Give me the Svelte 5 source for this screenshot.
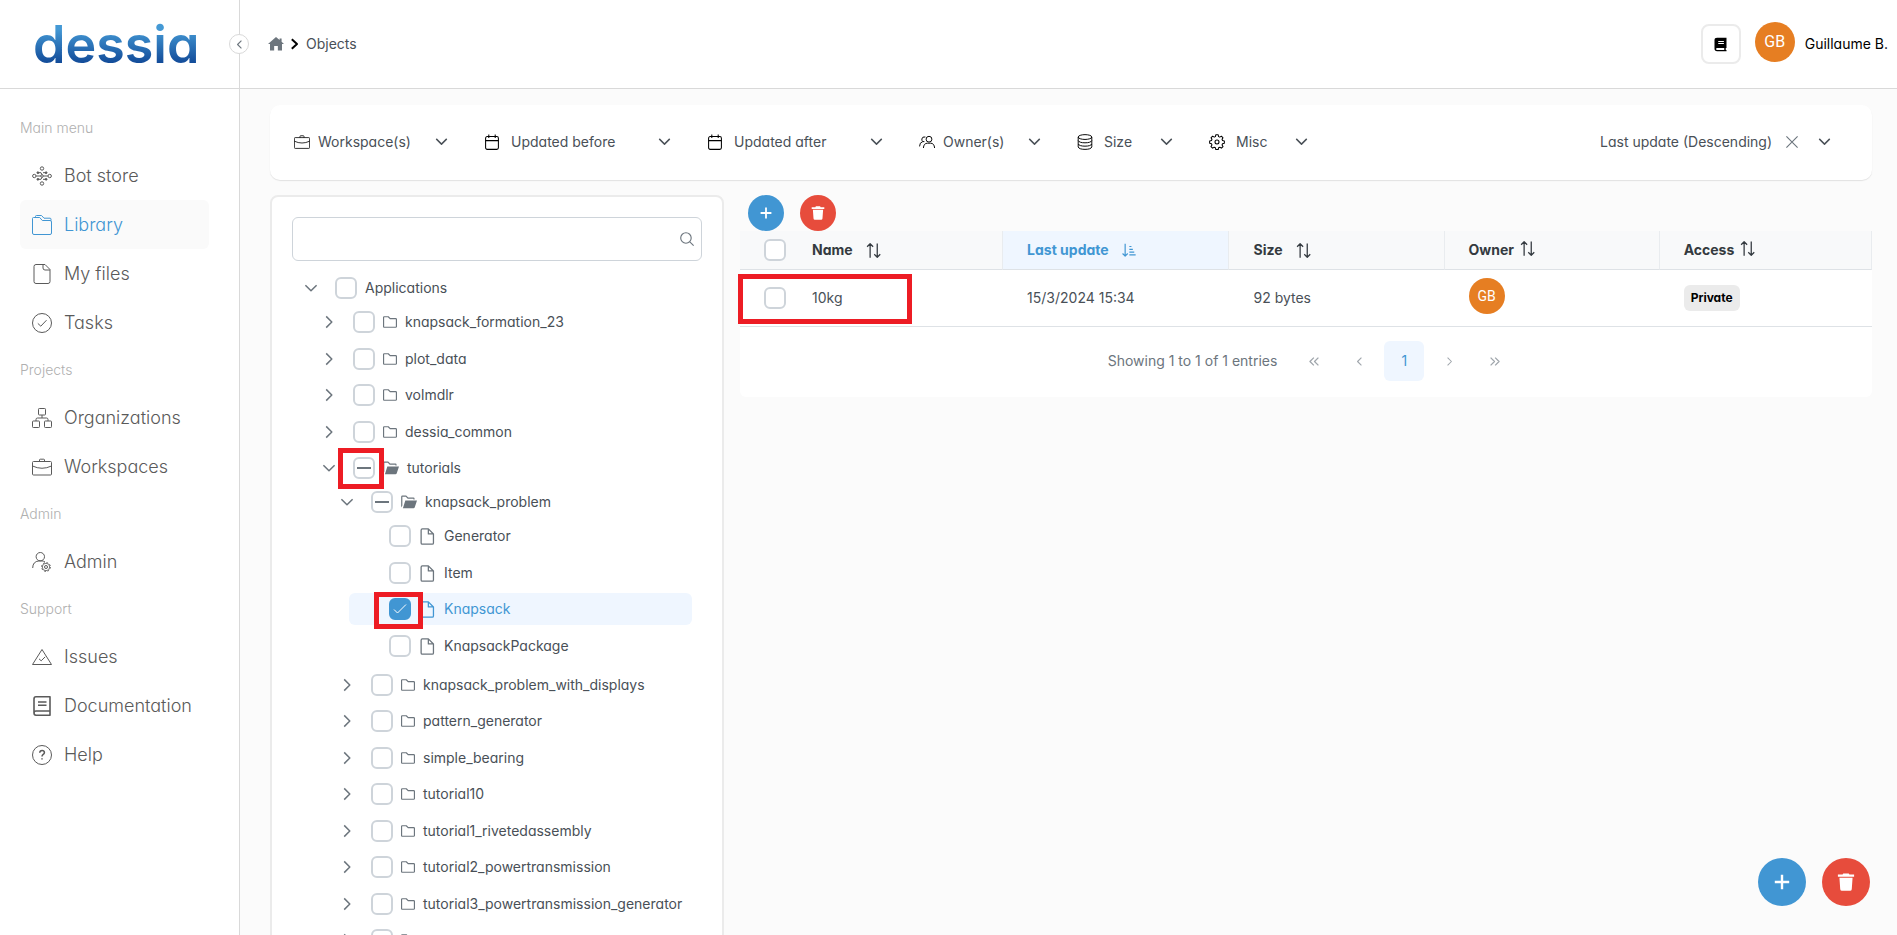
<script>
  const icons = {
    bots: '<circle cx="10" cy="2.5" r="1.7"/><circle cx="10" cy="17.5" r="1.7"/><circle cx="2.3" cy="10" r="1.7"/><circle cx="17.7" cy="10" r="1.7"/><circle cx="10" cy="10" r="1.3"/><path d="M4 10h4.500M11.500 10H16M6 6.700h3l1 2M14 6.700h-3M6 13.300h3l1-2M14 13.300h-3"/><g fill="currentColor"><circle cx="5.9" cy="6.7" r=".9"/><circle cx="14.1" cy="6.7" r=".9"/><circle cx="5.9" cy="13.3" r=".9"/><circle cx="14.1" cy="13.3" r=".9"/></g>',
    library: '<path d="M1.5 2.5h6.2l2.6 3h7.7q1.5 0 1.5 1.5v11q0 1.500-1.500 1.500H2q-1.500 0-1.500-1.500V3.500q0-1 1-1zM3.500 2.500V1.500q0-1 1-1h5l2.500 2.700h6q1 0 1 1v1.500"/>',
    file: '<path d="M4 .5h9l5 5v12q0 2-2 2H4q-2 0-2-2v-15q0-2 2-2zM11 .5v3.500q0 2 2 2h5"/>',
    tasks: '<circle cx="10" cy="10" r="9.5"/><path d="M5.800 10.400l3 2.800 5.700-6"/>',
    orgs: '<rect x="6.5" y=".5" width="7" height="6.5" rx=".8"/><rect x=".5" y="13" width="7" height="6.5" rx=".8"/><rect x="12.5" y="13" width="7" height="6.5" rx=".8"/><path d="M10 7v3M4 13v-1.500Q4 10 5.500 10h9q1.500 0 1.500 1.500V13"/>',
    briefcase: '<rect x=".5" y="4.5" width="19" height="13.5" rx="1"/><path d="M7.500 4.500V3q0-.8.8-.8h3.400q.8 0 .8.8v1.500M.5 9q9.500 4.500 19 0"/>',
    admin: '<circle cx="8.3" cy="4.7" r="4.2"/><path d="M.7 16q0-6.500 6.300-7.100h3q2 .2 3 1.100"/><circle cx="14" cy="15" r="4.4" stroke-dasharray="1.7 1.75"/><circle cx="14" cy="15" r="3.7" stroke-width=".8"/><circle cx="14" cy="15" r="1.5"/>',
    issues: '<path d="M10 2.500l9.500 15H.5zM7 11.800l2.200 2 4-4"/>',
    docs: '<path d="M18 .8H4Q2 .8 2 3v14q0 2.200 2 2.200h14zM2 17q0-2 2-2h14M6 6h8.500M6 9.300h8.500" stroke-width="1.600"/>',
    help: '<circle cx="10" cy="10" r="9.5"/><path d="M7.700 7.800q.2-2.300 2.400-2.300t2.300 1.900q0 1.100-1.200 1.900Q10 10.200 10 11.400M10 13.200v1.400" stroke-width="1.500"/>',
    calendar: '<g stroke-width="1.3"><rect x="2" y="3.2" width="16" height="16" rx="2"/><path d="M2 8.300h16M6 .5V5M14 .5V5"/></g>',
    owners: '<g stroke-width="1.2"><circle cx="12.5" cy="6.5" r="3.6"/><path d="M5.500 17.500q.5-6 5-6h4q4.500 0 5 6M8 3.700q-4-.7-4.500 2.600-.2 2 1.500 3.200M.7 15.500q0-5 4-6h2"/></g>',
    size: '<g stroke-width="1.2"><ellipse cx="10" cy="3.8" rx="8.5" ry="3"/><path d="M1.500 3.800v12.400q1 3 8.500 3t8.500-3V3.800M1.500 8.300q1.500 2.700 8.500 2.700t8.500-2.700M1.500 12.500q1.500 2.700 8.500 2.700t8.500-2.700"/></g>',
    gear: '<g stroke-width="1.3"><path d="M8.500 1h3l.5 2.300 1.500.6 2-1.200 2 2-1.200 2 .6 1.500 2.300.5v3l-2.300.5-.6 1.500 1.200 2-2 2-2-1.200-1.500.6-.5 2.300h-3L8 17.100l-1.500-.6-2 1.200-2-2 1.200-2-.6-1.500L.8 11.700v-3l2.300-.5.6-1.500-1.200-2 2-2 2 1.200L8 3.300z"/><circle cx="10" cy="10" r="2.5"/></g>',
    chevronDown: '<path d="M3 6.500l7 7 7-7" stroke-width="1.900"/>',
    chevronRight: '<path d="M6.500 3l7 7-7 7" stroke-width="1.900"/>',
    chevronLeft: '<path d="M13.500 3l-7 7 7 7" stroke-width="2"/>',
    separator: '<path d="M6 4l6.500 6L6 16" stroke-width="2.500"/>',
    doubleLeft: '<path d="M9 4l-6 6 6 6M16 4l-6 6 6 6" stroke-width="2"/>',
    doubleRight: '<path d="M4 4l6 6-6 6M11 4l6 6-6 6" stroke-width="2"/>',
    times: '<path d="M2 2l16 16M18 2L2 18" stroke-width="1.600"/>',
    home: '<path fill="currentColor" stroke="none" d="M10 1.200L0 10h2.500v8h5.200v-5.500h4.600V18h5.200v-8H20l-3-2.700V3h-2.500v2z"/>',
    book: '<path fill="currentColor" stroke="none" d="M5.500 1H18v13.500h-1v2.800h1V19H5.500Q2 19 2 15.800V4.200Q2 1 5.500 1zM7 5.300v1.300h7.500V5.300zM7 8v1.300h7.500V8zM5.500 14.500q-1.400 0-1.400 1.400t1.400 1.400H15v-2.800z"/>',
    search: '<g stroke-width="1.6"><circle cx="8.5" cy="8.5" r="7.5"/><path d="M14 14l5.500 5.500"/></g>',
    folder: '<path d="M2 2.500h5.500l2.700 2.700H18q1.200 0 1.200 1.200v9.900q0 1.200-1.200 1.200H2Q.8 17.500.8 16.300V3.700Q.8 2.500 2 2.500z" stroke-width="1.700"/>',
    folderOpen: '<path fill="currentColor" stroke="none" d="M5.400 8.200H20l-2.800 8.400q-.4 1.200-1.600 1.200H2.400zM.2 3.500q0-1.500 1.500-1.500h4.800l2.500 2.300h6.500q1.500 0 1.500 1.500v1.100h-1.500V5.800H8.400L6 3.500H1.700v11L.2 17z"/>',
    leaf: '<path d="M4 1h7l6 6v10.500q0 1.500-1.500 1.500H4q-1.500 0-1.500-1.500v-15Q2.500 1 4 1zM11 1v6h6" stroke-width="1.500"/>',
    sort: '<path d="M5.500 19.500V1M1.500 5l4-4 4 4M15 .5V19M11 15l4 4 4-4" stroke-width="1.700"/>',
    sortDesc: '<path d="M4.500 1v17.500M.8 15l3.700 3.700L8.200 15M10.500 5h3M10.500 9h5M10.500 13h7M10.500 17h9" stroke-width="1.700"/>',
    plus: '<path d="M10 1v18M1 10h18" stroke-width="3"/>',
    trash: '<path fill="currentColor" stroke="none" d="M7 .5h6l.8 1.300H19v2.400H1V1.800h5.200zM2.700 5.400h14.600l-.9 12.600q-.2 1.700-1.900 1.700h-9q-1.700 0-1.900-1.700z"/>'
  };

  const menu = [
    { title: 'Main menu', items: [['bots', 'Bot store'], ['library', 'Library'], ['file', 'My files'], ['tasks', 'Tasks']] },
    { title: 'Projects', items: [['orgs', 'Organizations'], ['briefcase', 'Workspaces']] },
    { title: 'Admin', items: [['admin', 'Admin']] },
    { title: 'Support', items: [['issues', 'Issues'], ['docs', 'Documentation'], ['help', 'Help']] }
  ];

  const filters = [
    { icon: 'briefcase', label: 'Workspace(s)', width: 155 },
    { icon: 'calendar', label: 'Updated before', width: 188, wide: true },
    { icon: 'calendar', label: 'Updated after', width: 177, wide: true },
    { icon: 'owners', label: 'Owner(s)', width: 123 },
    { icon: 'size', label: 'Size', width: 97, wide: true },
    { icon: 'gear', label: 'Misc', width: 100, wide: true }
  ];

  const folder = (label) => ({ label, icon: 'folder', children: [] });
  const leaf = (label, more = {}) => ({ label, icon: 'leaf', ...more });

  const tree = [{
    label: 'Applications',
    open: true,
    children: [
      folder('knapsack_formation_23'),
      folder('plot_data'),
      folder('volmdlr'),
      folder('dessia_common'),
      {
        label: 'tutorials', icon: 'folderOpen', open: true, partial: true, mark: 'mark-partial',
        children: [
          {
            label: 'knapsack_problem', icon: 'folderOpen', open: true, partial: true,
            children: [
              leaf('Generator'),
              leaf('Item'),
              leaf('Knapsack', { checked: true, mark: 'mark-checked' }),
              leaf('KnapsackPackage')
            ]
          },
          folder('knapsack_problem_with_displays'),
          folder('pattern_generator'),
          folder('simple_bearing'),
          folder('tutorial10'),
          folder('tutorial1_rivetedassembly'),
          folder('tutorial2_powertransmission'),
          folder('tutorial3_powertransmission_generator'),
          folder('')
        ]
      }
    ]
  }];
</script>

<style>
  :global(body) {
    margin: 0;
    background: #FBFBFB;
  }

  .app {
    display: flex;
    height: 100vh;
    overflow: hidden;
    font-family: 'Inter', 'Open Sans', sans-serif;
    font-feature-settings: 'cv11';
    font-size: 14px;
    line-height: 20px;
    color: #495057;
  }

  .app * {
    box-sizing: border-box;
  }

  .icon {
    display: block;
    flex: none;
    fill: none;
    stroke: currentColor;
    stroke-linejoin: round;
  }

  button, select, input {
    font: inherit;
    font-feature-settings: inherit;
    color: inherit;
    margin: 0;
  }

  button {
    display: flex;
    align-items: center;
    justify-content: center;
    padding: 0;
    border: 0;
    background: none;
    cursor: pointer;
  }

  /* sidebar */
  .sidebar {
    position: relative;
    flex: none;
    width: 240px;
    background: #FFFFFF;
    border-right: 1px solid #D9D9D9;
  }

  .brand {
    display: flex;
    align-items: center;
    height: 89px;
    padding: 2px 0 0 33px;
    border-bottom: 1px solid #D9D9D9;
  }

  .brand a {
    font-size: 52px;
    font-weight: 600;
    line-height: 80px;
    color: transparent;
    text-decoration: none;
    background: linear-gradient(#4499D5 30%, #0E4594 76%);
    background-clip: text;
    -webkit-background-clip: text;
  }

  .collapse {
    position: absolute;
    top: 34px;
    right: -10px;
    width: 20px;
    height: 20px;
    border: 1px solid #D9D9D9;
    border-radius: 50%;
    background: #FFFFFF;
    color: #6C757D;
    z-index: 2;
  }

  .menu {
    padding: 16px 30px 0 20px;
  }

  .menu h2 {
    margin: 0;
    font-size: 14px;
    font-weight: 300;
    line-height: 46px;
    color: #B0B0B0;
  }

  .menu ul, .tree ul {
    list-style: none;
    margin: 0;
    padding: 0;
  }

  .menu a {
    display: flex;
    align-items: center;
    gap: 12px;
    height: 49px;
    padding-left: 12px;
    border-radius: 6px;
    font-size: 18px;
    font-weight: 300;
    color: #5A5A5A;
    text-decoration: none;
  }

  .menu a.active {
    background: #FAFAFA;
    color: #4196D3;
  }

  /* header */
  .page {
    flex: 1;
    min-width: 0;
    display: flex;
    flex-direction: column;
  }

  .topbar {
    display: flex;
    align-items: center;
    flex: none;
    height: 89px;
    padding: 0 9px 0 28px;
    background: #FFFFFF;
    border-bottom: 1px solid #D9D9D9;
  }

  .crumbs {
    display: flex;
    align-items: center;
    gap: 3px;
    flex: 1;
  }

  .crumbs a {
    color: #6C757D;
  }

  .separator {
    color: #000000;
  }

  .guide {
    width: 40px;
    height: 40px;
    margin-right: 14px;
    border: 2px solid #EBEBEB;
    border-radius: 8px;
    color: #000000;
  }

  .avatar {
    display: flex;
    align-items: center;
    justify-content: center;
    width: 36px;
    height: 36px;
    margin-bottom: 4px;
    border-radius: 50%;
    background: #E67E22;
    color: #FFFFFF;
    font-family: 'Roboto', sans-serif;
  }

  .avatar.large {
    width: 40px;
    height: 40px;
    font-size: 16px;
    margin-right: 10px;
  }

  .user {
    color: #000000;
  }

  /* filters */
  .content {
    flex: 1;
    min-height: 0;
    display: flex;
    flex-direction: column;
    gap: 15px;
    padding: 16px 25px 0 30px;
  }

  .filters {
    display: flex;
    align-items: center;
    gap: 35px;
    flex: none;
    height: 75px;
    padding: 0 40px 2px 24px;
    border-radius: 10px;
    background: #FFFFFF;
    box-shadow: 0 1px 1px #E2E2E2;
  }

  .filter {
    display: flex;
    align-items: center;
    gap: 8px;
  }

  .filter.wide {
    gap: 11px;
  }

  .filter .glyph {
    color: #000000;
  }

  .filter select, .sort select {
    flex: 1;
    min-width: 0;
    appearance: none;
    border: 0;
    padding: 0;
    background: none;
    outline: 0;
    white-space: nowrap;
  }

  .sort {
    display: flex;
    align-items: center;
    margin-left: auto;
    gap: 12px;
  }

  .sort button {
    color: #6C757D;
    margin-right: 6px;
  }

  .columns {
    flex: 1;
    min-height: 0;
    display: flex;
    align-items: flex-start;
    gap: 16px;
  }

  /* tree */
  .tree {
    flex: 0 0 454px;
    padding: 20px;
    border: 2px solid #EBEBEB;
    border-radius: 8px;
    background: #FFFFFF;
  }

  .search {
    display: flex;
    align-items: center;
    height: 44px;
    margin-bottom: 9px;
    padding: 0 7px 0 12px;
    border: 1px solid #CED4DA;
    border-radius: 6px;
    color: #6C757D;
  }

  .search input {
    flex: 1;
    border: 0;
    outline: 0;
    background: none;
  }

  .tree > ul {
    padding: 0 10px 0 3px;
  }

  .tree li {
    padding: 2px 0;
  }

  .tree li:nth-child(even) {
    margin-top: 1px;
  }

  .tree li ul {
    padding-left: 18px;
  }

  .node {
    display: flex;
    align-items: center;
    gap: 8px;
    height: 32px;
    border-radius: 6px;
    white-space: nowrap;
  }

  .node.selected {
    background: #EFF6FF;
    color: #4196D3;
  }

  .node label {
    display: flex;
    align-items: center;
    gap: 8px;
  }

  .node .glyph {
    color: #6C757D;
  }

  .node.selected .glyph {
    color: #4196D3;
  }

  .toggler {
    width: 32px;
    height: 32px;
    color: #6C757D;
  }

  .check {
    position: relative;
    display: block;
    flex: none;
    width: 22px;
    height: 22px;
  }

  .check input {
    display: block;
    appearance: none;
    width: 22px;
    height: 22px;
    border: 2px solid #CED4DA;
    border-radius: 6px;
    background: #FFFFFF;
  }

  .check input:checked {
    border-color: #4196D3;
    background: #4196D3;
  }

  .check > svg {
    position: absolute;
    top: 4px;
    left: 4px;
    fill: none;
    stroke: #6C757D;
    stroke-width: 2;
    pointer-events: none;
  }

  .check input:checked + svg {
    stroke: #FFFFFF;
    stroke-width: 1;
  }

  /* highlight frames laid over the controls */
  .mark {
    position: absolute;
    border: 5px solid #ED1C24;
    pointer-events: none;
    z-index: 1;
  }

  .mark-partial {
    top: -9px;
    left: -15px;
    width: 46px;
    height: 41px;
  }

  .mark-checked {
    top: -6px;
    left: -15px;
    width: 49px;
    height: 37px;
  }

  .mark-row {
    top: -13px;
    left: -26px;
    width: 174px;
    height: 50px;
  }

  /* table */
  .results {
    flex: 1;
    min-width: 0;
  }

  .actions {
    display: flex;
    gap: 16px;
    padding-left: 8px;
  }

  .round {
    width: 36px;
    height: 36px;
    border-radius: 50%;
    color: #FFFFFF;
    background: #4196D3;
  }

  .round.danger {
    background: #E74C3C;
  }

  table {
    width: 100%;
    table-layout: fixed;
    border-collapse: separate;
    border-spacing: 0;
    background: #FFFFFF;
  }

  th {
    width: 19%;
    height: 39px;
    padding: 0 0 0 24px;
    border-right: 1px solid #E9ECEF;
    border-bottom: 1px solid #DEE2E6;
    background: #F8F9FA;
    color: #343A40;
    text-align: left;
    font-weight: 700;
  }

  th.select {
    width: 48px;
    border-right: 0;
  }

  th.sorted {
    width: 20%;
    background: #EFF6FF;
    color: #4196D3;
  }

  th:last-child {
    width: auto;
  }

  th button {
    gap: 13px;
    font-weight: 700;
  }

  th .tight {
    gap: 6px;
  }

  th .tight :global(.icon) {
    margin-bottom: 4px;
  }

  td {
    height: 57px;
    padding: 0 0 0 24px;
    border-bottom: 1px solid #DEE2E6;
  }

  .tag {
    display: inline-block;
    padding: 3px 7px;
    border-radius: 6px;
    background: #EBEBEB;
    color: #000000;
    font-size: 12px;
    font-weight: 700;
  }

  .pages {
    display: flex;
    align-items: center;
    justify-content: center;
    gap: 5px;
    height: 70px;
    padding: 0 0 2px 10px;
    border-radius: 0 0 6px 6px;
    background: #FFFFFF;
    color: #6C757D;
  }

  .pages span {
    margin-right: 12px;
  }

  .pages button {
    width: 40px;
    height: 40px;
    border-radius: 6px;
    color: #A0A6AC;
  }

  .pages button.current {
    background: #EFF6FF;
    color: #4196D3;
  }

  .floating {
    position: fixed;
    right: 27px;
    bottom: 29px;
    display: flex;
    gap: 16px;
  }

  .floating .round {
    width: 48px;
    height: 48px;
  }
</style>

{#snippet icon(name, size = 20)}
  <svg class="icon" width={size} height={size} viewBox="0 0 20 20" aria-hidden="true">{@html icons[name]}</svg>
{/snippet}

{#snippet check(id, label, node = {})}
  <span class="check">
    <input type="checkbox" {id} aria-label={label} checked={node.checked} indeterminate={node.partial} />
    {#if node.checked}
      <svg width="14" height="14"><path d="M1 7.500l3.500 3.500 8.500-8.500" /></svg>
    {:else if node.partial}
      <svg width="14" height="14"><path d="M0 7h14" /></svg>
    {/if}
    {#if node.mark}
      <span class="mark {node.mark}"></span>
    {/if}
  </span>
{/snippet}

{#snippet branch(nodes, path)}
  <ul>
    {#each nodes as node, i}
      <li>
        <div class="node" class:selected={node.checked}>
          {#if node.children}
            <button class="toggler" aria-label="Toggle {node.label}">{@render icon(node.open ? 'chevronDown' : 'chevronRight', 16)}</button>
          {:else}
            <span class="toggler"></span>
          {/if}
          {@render check(`${path}-${i}`, node.label || 'Folder', node)}
          <label for="{path}-{i}">
            {#if node.icon}
              <span class="glyph">{@render icon(node.icon, { folder: 14, folderOpen: 16, leaf: 17 }[node.icon])}</span>
            {/if}
            {node.label}
          </label>
        </div>
        {#if node.open}
          {@render branch(node.children, `${path}-${i}`)}
        {/if}
      </li>
    {/each}
  </ul>
{/snippet}

<div class="app">
  <aside class="sidebar">
    <div class="brand"><a href="#home">dessia</a></div>
    <button class="collapse" aria-label="Collapse menu">{@render icon('chevronLeft', 11)}</button>
    <nav class="menu">
      {#each menu as group}
        <h2>{group.title}</h2>
        <ul>
          {#each group.items as [name, label]}
            <li><a href="#{name}" class:active={name === 'library'}>{@render icon(name)}{label}</a></li>
          {/each}
        </ul>
      {/each}
    </nav>
  </aside>

  <div class="page">
    <header class="topbar">
      <nav class="crumbs">
        <a href="#home" aria-label="Home">{@render icon('home', 16)}</a>
        <span class="separator">{@render icon('separator', 16)}</span>
        <span>Objects</span>
      </nav>
      <button class="guide" aria-label="Guide">{@render icon('book', 15)}</button>
      <span class="avatar large">GB</span>
      <span class="user">Guillaume B.</span>
    </header>

    <main class="content">
      <section class="filters">
        {#each filters as filter}
          <div class="filter" class:wide={filter.wide} style:width="{filter.width}px">
            <span class="glyph">{@render icon(filter.icon, 16)}</span>
            <select aria-label={filter.label}><option>{filter.label}</option></select>
            {@render icon('chevronDown', 15)}
          </div>
        {/each}
        <div class="sort">
          <select aria-label="Sort by"><option>Last update (Descending)</option></select>
          <button aria-label="Clear sort">{@render icon('times', 14)}</button>
          {@render icon('chevronDown', 15)}
        </div>
      </section>

      <div class="columns">
        <section class="tree">
          <div class="search">
            <input type="text" aria-label="Search" />
            {@render icon('search', 14)}
          </div>
          {@render branch(tree, 'node')}
        </section>

        <section class="results">
          <div class="actions">
            <button class="round" aria-label="Add">{@render icon('plus', 12)}</button>
            <button class="round danger" aria-label="Delete">{@render icon('trash', 14)}</button>
          </div>
          <table>
            <thead>
              <tr>
                <th class="select">{@render check('all', 'Select all')}</th>
                <th><button>Name {@render icon('sort', 15)}</button></th>
                <th class="sorted"><button>Last update {@render icon('sortDesc', 14)}</button></th>
                <th><button>Size {@render icon('sort', 15)}</button></th>
                <th><button class="tight">Owner {@render icon('sort', 15)}</button></th>
                <th><button class="tight">Access {@render icon('sort', 15)}</button></th>
              </tr>
            </thead>
            <tbody>
              <tr>
                <td>{@render check('row', 'Select 10kg', { mark: 'mark-row' })}</td>
                <td>10kg</td>
                <td>15/3/2024 15:34</td>
                <td>92 bytes</td>
                <td><span class="avatar">GB</span></td>
                <td><span class="tag">Private</span></td>
              </tr>
            </tbody>
          </table>
          <div class="pages">
            <span>Showing 1 to 1 of 1 entries</span>
            <button aria-label="First page">{@render icon('doubleLeft', 13)}</button>
            <button aria-label="Previous page">{@render icon('chevronLeft', 11)}</button>
            <button class="current">1</button>
            <button aria-label="Next page">{@render icon('chevronRight', 11)}</button>
            <button aria-label="Last page">{@render icon('doubleRight', 13)}</button>
          </div>
        </section>
      </div>
    </main>
  </div>

  <div class="floating">
    <button class="round" aria-label="Add object">{@render icon('plus', 16)}</button>
    <button class="round danger" aria-label="Delete object">{@render icon('trash', 18)}</button>
  </div>
</div>
